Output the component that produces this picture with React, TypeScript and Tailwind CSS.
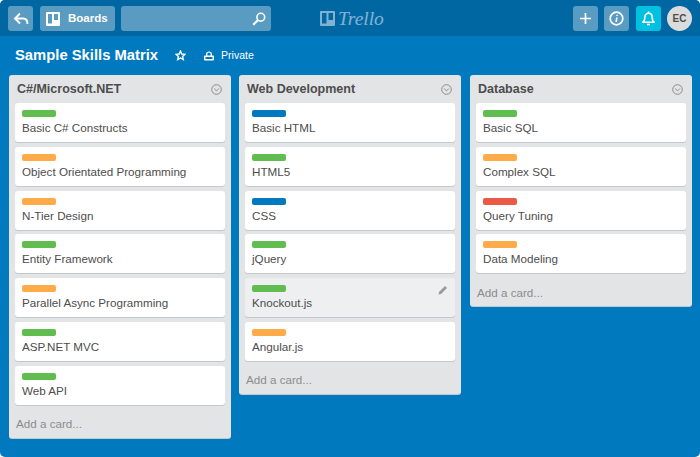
import React from "react";

const G = "bg-[#61bd4f]";
const O = "bg-[#ffab4a]";
const B = "bg-[#0079bf]";
const R = "bg-[#eb5a46]";

type CardT = { c: string; t: string; hover?: boolean };
const lists: { title: string; cards: CardT[] }[] = [
  {
    title: "C#/Microsoft.NET",
    cards: [
      { c: G, t: "Basic C# Constructs" },
      { c: O, t: "Object Orientated Programming" },
      { c: O, t: "N-Tier Design" },
      { c: G, t: "Entity Framework" },
      { c: O, t: "Parallel Async Programming" },
      { c: G, t: "ASP.NET MVC" },
      { c: G, t: "Web API" },
    ],
  },
  {
    title: "Web Development",
    cards: [
      { c: B, t: "Basic HTML" },
      { c: G, t: "HTML5" },
      { c: B, t: "CSS" },
      { c: G, t: "jQuery" },
      { c: G, t: "Knockout.js", hover: true },
      { c: O, t: "Angular.js" },
    ],
  },
  {
    title: "Database",
    cards: [
      { c: G, t: "Basic SQL" },
      { c: O, t: "Complex SQL" },
      { c: R, t: "Query Tuning" },
      { c: O, t: "Data Modeling" },
    ],
  },
];

function Chevron() {
  return (
    <svg width="11" height="11" viewBox="0 0 11 11" fill="none" stroke="#8c8c8c" strokeWidth="1">
      <circle cx="5.5" cy="5.5" r="4.8" />
      <path d="M3.2 4.6 5.5 6.9 7.8 4.6" />
    </svg>
  );
}

function List({ title, cards }: { title: string; cards: CardT[] }) {
  return (
    <div className="w-[222px] shrink-0 self-start rounded-[3px] bg-[#e2e4e6] shadow-[0_1px_0_#c4c9cc] last:ml-[1px]">
      <div className="flex h-[28px] items-center justify-between pl-[8px] pr-[9px]">
        <span className="text-[12.5px] font-bold leading-none text-[#4d4d4d]">{title}</span>
        <Chevron />
      </div>
      <div className="flex flex-col gap-[4.8px] px-[6px]">
        {cards.map((card) => (
          <div
            key={card.t}
            className={`relative h-[39px] rounded-[3px] px-[7px] pt-[7px] shadow-[0_1px_0_#c4c9cc] ${
              card.hover ? "bg-[#edeff0]" : "bg-white"
            }`}
          >
            <div className={`h-[7px] w-[34px] rounded-[2px] ${card.c}`} />
            <div className="mt-[3px] text-[11.65px] leading-[16px] text-[#4d4d4d]">{card.t}</div>
            {card.hover && (
              <svg className="absolute right-[7px] top-[7px]" width="10" height="10" viewBox="0 0 10 10" fill="#999">
                <path d="M0.5 9.5 1 7 7 1 9 3 3 9Z" />
              </svg>
            )}
          </div>
        ))}
      </div>
      <div className="flex h-[33px] items-center px-[7px] pt-[5px] text-[11.65px] text-[#8c8c8c]">Add a card...</div>
    </div>
  );
}

const btn = "flex h-[25px] items-center justify-center rounded-[3px]";
const tint = "bg-[#5a9bc2]";

export default function App() {
  return (
    <div
      className="flex h-[457px] w-[700px] flex-col overflow-hidden rounded-[5px] bg-[#0079bf]"
      style={{ fontFamily: '"Liberation Sans", Arial, sans-serif' }}
    >
      <header className="flex h-[36px] shrink-0 items-center bg-[#0067a3] pl-[8px] pr-[8px] pt-[1px]">
        <div className={`${btn} ${tint} w-[25px]`}>
          <svg width="16" height="14" viewBox="0 0 16 14" fill="none" stroke="white" strokeWidth="1.9">
            <path d="M7 1.5 2 6.5 7 11.5" />
            <path d="M2 6.5H10Q14.5 6.5 14.5 12" />
          </svg>
        </div>
        <div className={`${btn} ${tint} ml-[7px] w-[75px] justify-start gap-[8px] pl-[6px]`}>
          <svg width="14" height="14" viewBox="0 0 14 14">
            <path
              fill="white"
              fillRule="evenodd"
              d="M1 0H13A1 1 0 0 1 14 1V13A1 1 0 0 1 13 14H1A1 1 0 0 1 0 13V1A1 1 0 0 1 1 0ZM2 2V11.5H6V2ZM8 2V8H12V2Z"
            />
          </svg>
          <span className="text-[11.5px] font-bold text-white">Boards</span>
        </div>
        <div className={`${btn} ${tint} ml-[6px] w-[150px] justify-end pr-[5px]`}>
          <svg width="14" height="14" viewBox="0 0 14 14" fill="none" stroke="white">
            <circle cx="8.8" cy="5.2" r="3.9" strokeWidth="1.6" />
            <path d="M5.8 8.2 1.2 12.8" strokeWidth="2.2" />
          </svg>
        </div>
        <div className="ml-[49px] flex flex-1 items-center gap-[3px] opacity-50">
          <svg width="15" height="15" viewBox="0 0 15 15">
            <path
              fill="white"
              fillRule="evenodd"
              d="M1 0H14A1 1 0 0 1 15 1V14A1 1 0 0 1 14 15H1A1 1 0 0 1 0 14V1A1 1 0 0 1 1 0ZM2 2V12.5H6.5V2ZM8.5 2V9H13V2Z"
            />
          </svg>
          <span
            className="text-[19.5px] leading-none text-white italic"
            style={{ fontFamily: '"Liberation Serif", serif' }}
          >
            Trello
          </span>
        </div>
        <div className={`${btn} ${tint} w-[25px]`}>
          <svg width="13" height="13" viewBox="0 0 13 13" stroke="white" strokeWidth="1.7">
            <path d="M6.5 1V12M1 6.5H12" />
          </svg>
        </div>
        <div className={`${btn} ${tint} ml-[6.5px] w-[25px]`}>
          <svg width="15" height="15" viewBox="0 0 15 15" fill="none" stroke="white">
            <circle cx="7.5" cy="7.5" r="6.3" strokeWidth="1.7" />
            <path d="M7.9 6.3 7.1 11" strokeWidth="1.6" />
            <path d="M8 3.7V5" strokeWidth="1.6" />
          </svg>
        </div>
        <div className={`${btn} ml-[6.5px] w-[25px] bg-[#00c2e0]`}>
          <svg width="13" height="15" viewBox="0 0 13 15" fill="none" stroke="white" strokeWidth="1.6">
            <path d="M1 11.2H12C10.5 10 10.2 8 10.2 6.5 10.2 4 8.8 2.2 6.5 2.2S2.8 4 2.8 6.5C2.8 8 2.5 10 1 11.2Z" />
            <path d="M6.5 0.5V2M5 13.5H8" />
          </svg>
        </div>
        <div className="ml-[6.5px] flex h-[25px] w-[25px] items-center justify-center rounded-full bg-[#dcdcdc] text-[10px] font-bold text-[#4d4d4d]">
          EC
        </div>
      </header>

      <div className="flex h-[39px] shrink-0 items-center pl-[15px] text-white">
        <span className="text-[14.8px] font-bold">Sample Skills Matrix</span>
        <svg className="ml-[17px]" width="11" height="11" viewBox="0 0 11 11" fill="none" stroke="white" strokeWidth="1.4">
          <path d="M5.5 1 6.8 4 10 4.3 7.6 6.4 8.3 9.6 5.5 8 2.7 9.6 3.4 6.4 1 4.3 4.2 4Z" />
        </svg>
        <svg className="ml-[18px]" width="10" height="10" viewBox="0 0 10 10">
          <path
            fill="white"
            fillRule="evenodd"
            d="M1 4.5H2V3.2C2 1.5 3.2.5 5 .5S8 1.5 8 3.2V4.5H9A1 1 0 0 1 10 5.5V8.5A1 1 0 0 1 9 9.5H1A1 1 0 0 1 0 8.5V5.5A1 1 0 0 1 1 4.5ZM3.4 4.5H6.6V3.2C6.6 2.3 6 1.8 5 1.8S3.4 2.3 3.4 3.2ZM1.5 6V8H8.5V6Z"
          />
        </svg>
        <span className="ml-[7px] text-[10.5px]">Private</span>
      </div>

      <div className="flex flex-1 items-start gap-[8px] pl-[9px]">
        {lists.map((l) => (
          <List key={l.title} title={l.title} cards={l.cards} />
        ))}
      </div>
    </div>
  );
}
